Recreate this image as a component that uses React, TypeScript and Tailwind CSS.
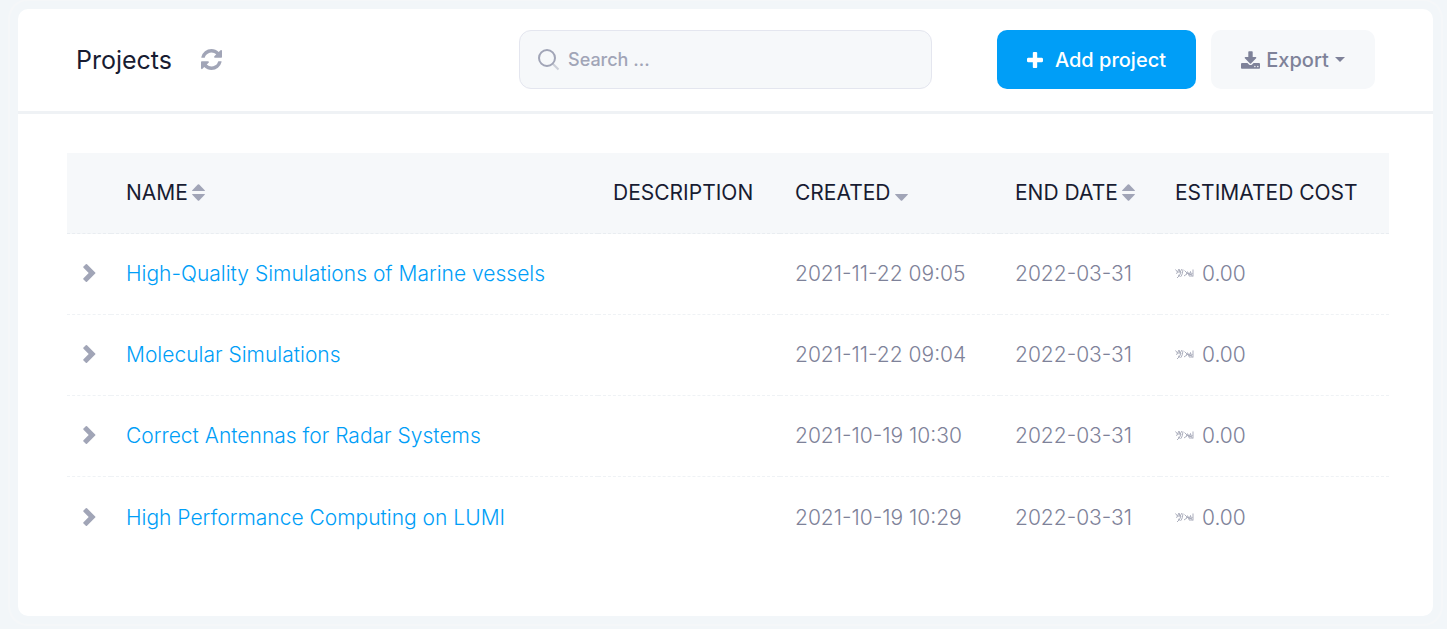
type Project = { name: string; description: string; created: string; end: string; cost: string };

const projects: Project[] = [
  { name: "High-Quality Simulations of Marine vessels", description: "", created: "2021-11-22 09:05", end: "2022-03-31", cost: "0.00" },
  { name: "Molecular Simulations", description: "", created: "2021-11-22 09:04", end: "2022-03-31", cost: "0.00" },
  { name: "Correct Antennas for Radar Systems", description: "", created: "2021-10-19 10:30", end: "2022-03-31", cost: "0.00" },
  { name: "High Performance Computing on LUMI", description: "", created: "2021-10-19 10:29", end: "2022-03-31", cost: "0.00" },
];

function RefreshIcon() {
  return (
    <svg width="21" height="21" viewBox="0 0 1536 1536" fill="currentColor" aria-hidden="true">
      <path d="M1511 928q0 5-1 7-64 268-268 434.500T764 1536q-146 0-282.500-55T238 1324l-129 129q-19 19-45 19t-45-19-19-45V960q0-26 19-45t45-19h448q26 0 45 19t19 45-19 45l-137 137q71 66 161 102t187 36q134 0 250-65t186-179q11-17 53-117 8-23 30-23h192q13 0 22.500 9.500t9.500 22.500zm25-800v448q0 26-19 45t-45 19h-448q-26 0-45-19t-19-45 19-45l138-138Q969 256 768 256q-134 0-250 65T332 500q-11 17-53 117-8 23-30 23H50q-13 0-22.500-9.500T18 608v-7q65-268 270-434.500T768 0q146 0 284 55.500T1297 212l130-129q19-19 45-19t45 19 19 45z" />
    </svg>
  );
}

function PlusIcon() {
  return (
    <svg width="16" height="16" viewBox="0 0 1408 1408" fill="currentColor" aria-hidden="true">
      <path d="M1408 608v192q0 40-28 68t-68 28H896v416q0 40-28 68t-68 28H608q-40 0-68-28t-28-68V896H96q-40 0-68-28t-28-68V608q0-40 28-68t68-28h416V96q0-40 28-68t68-28h192q40 0 68 28t28 68v416h416q40 0 68 28t28 68z" />
    </svg>
  );
}

function DownloadIcon() {
  return (
    <svg width="19" height="18" viewBox="0 0 1664 1536" fill="currentColor" aria-hidden="true">
      <path d="M1280 1344q0-26-19-45t-45-19-45 19-19 45 19 45 45 19 45-19 19-45zm256 0q0-26-19-45t-45-19-45 19-19 45 19 45 45 19 45-19 19-45zm128-224v320q0 40-28 68t-68 28H96q-40 0-68-28t-28-68v-320q0-40 28-68t68-28h465l135 136q58 56 136 56t136-56l136-136h464q40 0 68 28t28 68zm-325-569q17 41-14 70l-448 448q-18 19-45 19t-45-19L339 621q-31-29-14-70 17-39 59-39h256V64q0-26 19-45t45-19h256q26 0 45 19t19 45v448h256q42 0 59 39z" />
    </svg>
  );
}

function ChevronIcon() {
  return (
    <svg width="14" height="20" viewBox="0 0 14 20" fill="#a1a5b7" aria-hidden="true">
      <path d="M13.200 9.600L5 17.800q-.6.600-1.200 0L1.500 15.500q-.6-.6 0-1.200L6.700 9 1.500 3.700q-.6-.6 0-1.200L3.800.3q.6-.6 1.200 0l8.200 8.100q.6.600 0 1.200z" />
    </svg>
  );
}

function SortIcon({ down = false }: { down?: boolean }) {
  return (
    <svg width="13" height="19" viewBox="0 0 13 19" fill="#a1a5b7" aria-hidden="true">
      {!down && <path d="M.6 7h11.800q.9 0 .3-.8L7.200.6Q6.500 0 5.800.6L.3 6.200Q-.3 7 .6 7z" />}
      <path d="M.6 10h11.800q.9 0 .3.800L7.200 16.400Q6.500 17 5.800 16.400L.3 10.800Q-.3 10 .6 10z" />
    </svg>
  );
}

function CurrencyMark() {
  return (
    <svg width="19" height="12" viewBox="0 0 19 12" fill="none" stroke="#7e8299" strokeWidth=".9" opacity=".7" aria-hidden="true">
      <path d="M.5 1.500l2 2.500L4 1l1 3L7 1M1 5.500q2.500-2 5-1.500-1 4-4 6M3 7l2.500 1.500M8 1.500q-.5 5-2 7M9.500 2.500l3 3-3.500 2.500M11 6q2-2 3.500 0t3-1M12.500 3.500l1.500 4L15.500 3.500l1 4M18 1.500V8.500M14 8h4" />
    </svg>
  );
}

const headings: { label: string; sort?: "both" | "down" }[] = [
  { label: "NAME", sort: "both" },
  { label: "DESCRIPTION" },
  { label: "CREATED", sort: "down" },
  { label: "END DATE", sort: "both" },
  { label: "ESTIMATED COST" },
];

export default function App() {
  return (
    <div className="flex min-h-screen flex-col bg-[#f2f6f9] pt-[9px] pr-[14px] pb-[13px] pl-[18px] font-['Inter',sans-serif]">
      <main className="grow rounded-[10px] bg-white pb-14 shadow-[0_0_0_8px_#f2f6f9,0_0_0_10px_#f5f7f9]">
        <header className="flex items-center border-b-[3px] border-[#eff2f5] px-[58px] pt-[21px] pb-[22px]">
          <h1 className="text-[25px] leading-[30px] text-[#181c32]">Projects</h1>
          <button type="button" aria-label="Refresh" className="ml-[29px] text-[#a1a5b7]">
            <RefreshIcon />
          </button>
          <label className="mr-[65px] ml-auto flex h-[59px] w-[413px] items-center gap-2 rounded-xl border border-[#e4e6ef] bg-[#f6f8fa] px-[17px]">
            <svg className="shrink-0" width="23" height="23" viewBox="0 0 23 23" fill="none" stroke="#a1a5b7" strokeWidth="2" aria-hidden="true">
              <circle cx="10" cy="10" r="8" />
              <path d="M16 16l5.500 5.500" opacity=".5" />
            </svg>
            <input
              type="search"
              aria-label="Search projects"
              placeholder="Search ..."
              className="w-full min-w-0 bg-transparent text-[18px] font-medium text-[#5e6278] outline-none placeholder:text-[#a1a5b7]"
            />
          </label>
          <button type="button" className="mr-[15px] flex h-[59px] w-[199px] items-center justify-center gap-3 rounded-[10px] bg-[#009ef7] text-[20px] font-medium text-white">
            <PlusIcon />
            Add project
          </button>
          <button type="button" className="flex h-[59px] w-[164px] items-center justify-center gap-[6px] rounded-[10px] bg-[#f6f8fa] text-[20px] font-medium text-[#7e8299]">
            <DownloadIcon />
            Export
            <svg width="10" height="5" viewBox="0 0 10 5" fill="currentColor" aria-hidden="true">
              <path d="M0 0h10L5 5z" />
            </svg>
          </button>
        </header>
        <div className="pt-[39px] pr-[44px] pl-[49px]">
          <table className="w-full table-fixed border-separate border-spacing-0 text-left text-[21px] leading-8 whitespace-nowrap">
            <colgroup>
              <col className="w-[44px]" />
              <col />
              <col className="w-[182px]" />
              <col className="w-[220px]" />
              <col className="w-[160px]" />
              <col className="w-[229px]" />
            </colgroup>
            <thead className="bg-[#f6f8fa] text-[#181c32]">
              <tr>
                <th aria-label="Details" className="h-[81px] border-b border-dashed border-[#e9edf1]" />
                {headings.map((h) => (
                  <th key={h.label} scope="col" className="h-[81px] border-b border-dashed border-[#e9edf1] pl-[15px] font-normal">
                    {h.sort ? (
                      <button type="button" className="flex items-center gap-1">
                        {h.label}
                        <SortIcon down={h.sort === "down"} />
                      </button>
                    ) : (
                      h.label
                    )}
                  </th>
                ))}
              </tr>
            </thead>
            <tbody className="font-light text-[#7e8299] [&_td]:h-[81px] [&_td]:border-b [&_td]:border-dashed [&_td]:border-[#eff2f5] [&_td]:pl-[15px] [&_tr:last-child_td]:border-0">
              {projects.map((p) => (
                <tr key={p.name}>
                  <td>
                    <button type="button" aria-label={`Expand ${p.name}`} className="block">
                      <ChevronIcon />
                    </button>
                  </td>
                  <td>
                    <a href="#" className="text-[#009ef7]">{p.name}</a>
                  </td>
                  <td>{p.description}</td>
                  <td>{p.created}</td>
                  <td>{p.end}</td>
                  <td>
                    <span className="flex items-center gap-2">
                      <CurrencyMark />
                      {p.cost}
                    </span>
                  </td>
                </tr>
              ))}
            </tbody>
          </table>
        </div>
      </main>
    </div>
  );
}
